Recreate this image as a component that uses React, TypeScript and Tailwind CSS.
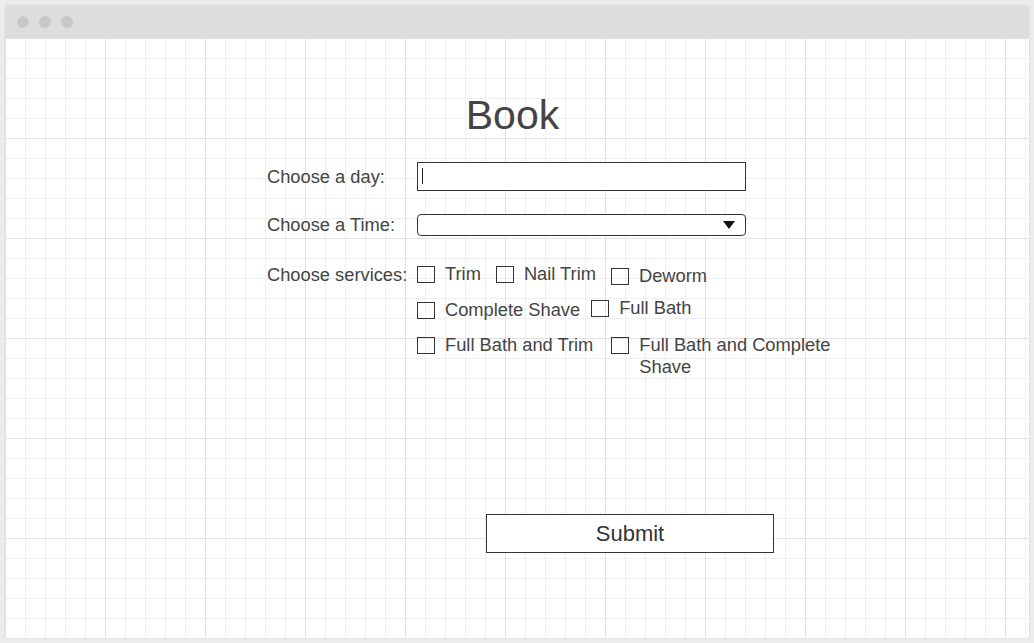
const services = {
  rowA: [
    { label: "Trim", className: "" },
    { label: "Nail Trim", className: "ml-[15px]" },
    { label: "Deworm", className: "ml-[15px] mt-[2px]" },
  ],
  rowB: [
    { label: "Complete Shave", className: "mt-[2px]" },
    { label: "Full Bath", className: "ml-[11px]" },
  ],
  rowC: [
    { label: "Full Bath and Trim", className: "" },
    { label: "Full Bath and Complete Shave", className: "ml-[18px] w-[232px]" },
  ],
}

const Check = ({ label, className }: { label: string; className: string }) => {
  return (
    <label className={`flex items-start gap-[10px] ${className}`}>
      <span className="mt-[3px] h-[17px] w-[18px] shrink-0 border border-[#333]" />
      <span className="text-[18.3px] leading-[22px] text-[#444]">{label}</span>
    </label>
  )
}

const App = () => {
  return (
    <div className="h-[643px] w-[1034px] bg-[#ececec] pl-[5px] pt-[5px] font-['Liberation_Sans',Arial,sans-serif]">
      <div className="flex h-[633px] w-[1024px] flex-col overflow-hidden rounded-[3px] bg-white shadow-[0_0_2px_rgba(0,0,0,0.12)]">
        {/* title bar */}
        <div className="flex h-[33px] shrink-0 items-center gap-[10px] bg-[#dddddd] pl-[12px]">
          <span className="h-[12px] w-[12px] rounded-full bg-[#c8c8c8]" />
          <span className="h-[12px] w-[12px] rounded-full bg-[#c8c8c8]" />
          <span className="h-[12px] w-[12px] rounded-full bg-[#c8c8c8]" />
        </div>

        {/* canvas */}
        <div className="flex-1 [background-image:linear-gradient(to_right,#e2e2e2_1px,transparent_1px),linear-gradient(to_bottom,#e2e2e2_1px,transparent_1px),linear-gradient(to_right,#efefef_1px,transparent_1px),linear-gradient(to_bottom,#efefef_1px,transparent_1px)] [background-size:100px_100px,100px_100px,20px_20px,20px_20px]">
          <h1 className="pr-[9px] pt-[54px] text-center text-[41px] leading-[47px] text-[#444]">Book</h1>

          <div className="pl-[262px] text-[18.3px] text-[#444]">
            <div className="mt-[23px] flex items-center">
              <span className="w-[150px] leading-[22px]">Choose a day:</span>
              <div className="relative h-[29px] w-[329px] border border-[#333] bg-white">
                <span className="absolute left-[4px] top-[5px] h-[16px] w-[1px] bg-[#222]" />
              </div>
            </div>

            <div className="mt-[23px] flex items-center">
              <span className="w-[150px] leading-[22px]">Choose a Time:</span>
              <div className="flex h-[22px] w-[329px] items-center justify-end rounded-[4px] border border-[#333] bg-white pr-[10px]">
                <svg width="12" height="8" viewBox="0 0 12 8">
                  <path d="M0 0 L12 0 L6 8 Z" fill="#111" />
                </svg>
              </div>
            </div>

            <div className="mt-[27px] flex items-start">
              <span className="mt-[1px] w-[150px] leading-[22px]">Choose services:</span>
              <div className="flex flex-col">
                <div className="flex items-start">
                  {services.rowA.map(s => (
                    <Check key={s.label} label={s.label} className={s.className} />
                  ))}
                </div>
                <div className="mt-[10px] flex items-start">
                  {services.rowB.map(s => (
                    <Check key={s.label} label={s.label} className={s.className} />
                  ))}
                </div>
                <div className="mt-[13px] flex items-start">
                  {services.rowC.map(s => (
                    <Check key={s.label} label={s.label} className={s.className} />
                  ))}
                </div>
              </div>
            </div>

            <button
              type="button"
              className="ml-[219px] mt-[136px] h-[39px] w-[288px] border border-[#333] bg-white text-[22px] text-[#333]"
            >
              Submit
            </button>
          </div>
        </div>
      </div>
    </div>
  )
}

export default App
